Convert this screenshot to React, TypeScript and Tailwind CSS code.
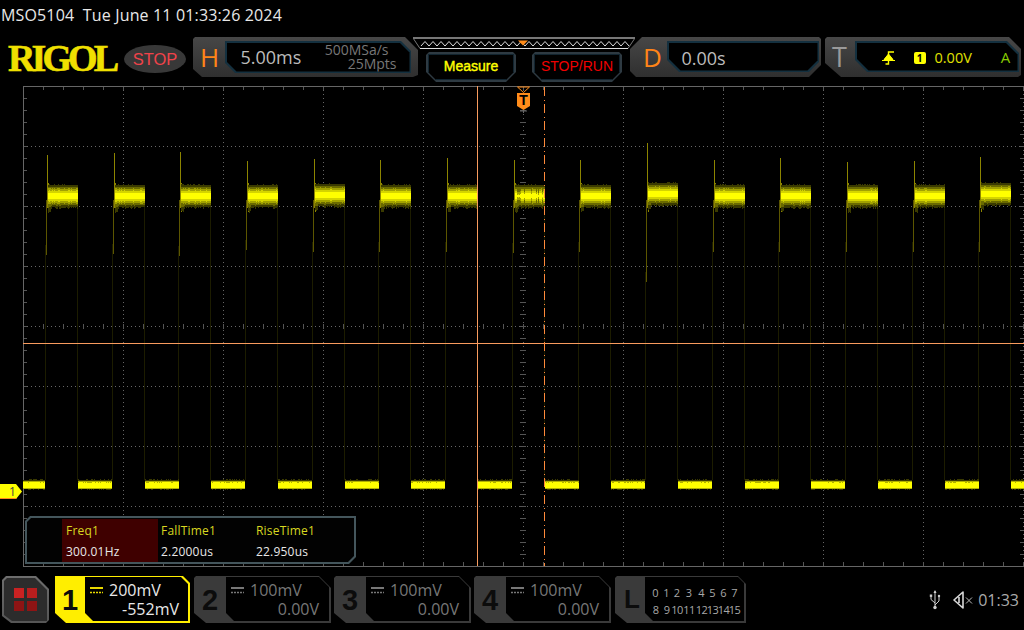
import React, { useMemo } from "react";

const F = { fontFamily: '"Open Sans", "Noto Sans", sans-serif' };

function rng(seed: number) {
  let s = seed;
  return () => {
    s = (s * 16807) % 2147483647;
    return (s - 1) / 2147483646;
  };
}

const STARTS = [47, 113.5, 180, 247, 313.5, 380, 447, 514, 580, 647, 714, 780, 847, 914, 980];
const TOPS = [155, 153, 152, 161, 159, 160, 158, 160, 160, 143, 160, 158, 162, 161, 157];
const BOTS = [255, 254, 256, 250, 252, 252, 252, 253, 252, 282, 252, 252, 252, 252, 252];
const SHIFT = [0, 0, 0, 0, -1, 0, 0, 0, 0, -2, 0, 0, 0, 0, -2];

function Wave() {
  const d = useMemo(() => {
    const r = rng(91);
    const X0 = 23;
    const Y0 = 86;
    const bands = ["", "", "", "", ""];
    const low = ["", "", ""];
    const dim: string[] = [];
    const spikesHi: string[] = [];
    const spikesLo: string[] = [];
    STARTS.forEach((s, i) => {
      const a = Math.round(s) - X0;
      const off = SHIFT[i];
      const stripes = i === 7;
      spikesHi.push(`M${a + 0.5} ${TOPS[i] - Y0}V${208 - Y0}`);
      spikesHi.push(`M${a + 1.5} ${183 - Y0}V${212 - Y0}`);
      spikesLo.push(`M${a - 0.5} ${200 - Y0}V${BOTS[i] - Y0}`);
      dim.push(`M${a - 1.5} ${BOTS[i] - 10 - Y0}V${480 - Y0}`);
      dim.push(`M${a + 30.5} ${207 - Y0}V${480 - Y0}`);
      for (let k = 1; k < 31; k++) {
        if (a + k + X0 > 1024) break;
        const x = a + k + 0.5;
        const n1 = r() * 1.4;
        const n2 = r() * 2.4;
        const v = r() * 2;
        const st = stripes && r() < 0.35 ? 3 + Math.round(r() * 2) : 0;
        const over = k < 4 ? 4 : 0;
        const c = 196 + off;
        const spans = [
          [c - 10.5 - n1, c + 10.5 + n2 + over],
          [c - 8.5 - n1 * 0.6, c + 8.5 + n2 * 0.5 + over * 0.5],
          [c - 6.5 - v * 0.7 + st, c + 6.5 + v * 0.7 - st],
          [c - 4.5 - v * 0.6 + st, c + 4.5 + v * 0.6 - st],
          [c - 2.5 - v * 0.5 + st * 0.5, c + 2.5 + v * 0.5 - st * 0.5],
        ];
        spans.forEach((sp, b) => {
          bands[b] += `M${x} ${Math.round(sp[0]) - Y0}V${Math.round(sp[1]) - Y0}`;
        });
      }
    });
    const lows: [number, number][] = [[23, 45]];
    STARTS.forEach((s) => lows.push([Math.round(s) + 31, Math.round(s) + 65]));
    lows.forEach(([p, q]) => {
      for (let x = p; x < Math.min(q, 1024); x++) {
        const xx = x - X0 + 0.5;
        low[0] += `M${xx} ${479 + Math.round(r() * 1.4) - Y0}V${490 - Math.round(r() * 1.4) - Y0}`;
        low[1] += `M${xx} ${481 - Y0}V${489 - Y0}`;
        low[2] += `M${xx} ${482 + Math.round(r() * 0.7) - Y0}V${488 - Y0}`;
      }
    });
    return { bands, low, dim: dim.join(""), hi: spikesHi.join(""), lo: spikesLo.join("") };
  }, []);
  const colors = ["#3a3a00", "#6a6a00", "#a2a200", "#d4d400", "#ffff00"];
  const lowColors = ["#3a3a00", "#b0b000", "#ffff00"];
  return (
    <g shapeRendering="crispEdges" fill="none" strokeWidth="1">
      <path d={d.dim} stroke="#1c1c00" />
      <path d={d.lo} stroke="#5c5600" />
      <path d={d.hi} stroke="#8c8400" />
      {d.bands.map((b, i) => (
        <path key={i} d={b} stroke={colors[i]} />
      ))}
      {d.low.map((b, i) => (
        <path key={i} d={b} stroke={lowColors[i]} />
      ))}
    </g>
  );
}

function Grid() {
  const p: string[] = [];
  for (let x = 0; x <= 1001; x += 20) {
    p.push(`M${x + 0.5} 0V4`);
    p.push(`M${x + 0.5} 480V476`);
    p.push(`M${x + 0.5} 238V243`);
  }
  for (let y = 0; y <= 480; y += 12) {
    p.push(`M0 ${y + 0.5}H4`);
    p.push(`M1001 ${y + 0.5}H997`);
    p.push(`M497 ${y + 0.5}H503`);
  }
  const dots: string[] = [];
  for (let x = 100; x < 1001; x += 100) dots.push(`M${x + 0.5} 0V480`);
  for (let y = 60; y < 480; y += 60) dots.push(`M0 ${y + 0.5}H1001`);
  return (
    <g shapeRendering="crispEdges" fill="none">
      <path d={dots.join("")} stroke="#666" strokeDasharray="1 3" />
      <path d={p.join("")} stroke="#555" />
      <path d="M0.5 0V480M0 0.5H1001M0 480.5H1001" stroke="#666" />
    </g>
  );
}

function TopBar() {
  let z = "M8 9";
  for (let x = 8, i = 0; x < 216; x += 4, i++) z += `L${x + 4} ${i % 2 ? 9 : 4.5}`;
  return (
    <svg width="222" height="13" viewBox="0 0 222 13" className="block">
      <path d="M0 1H222L215 11.5H7Z" fill="none" stroke="#777" strokeWidth="1" />
      <path d="M0 1H222" stroke="#777" strokeWidth="2" />
      <path d="M7 11.5H215" stroke="#ddd" strokeWidth="1" />
      <path d={z} fill="none" stroke="#ddd" strokeWidth="1" />
      <path d="M105 3.5H115L110 8.5Z" fill="#ff8c1a" />
    </svg>
  );
}

function DcIcon({ c }: { c: string }) {
  return (
    <svg width="13" height="7" viewBox="0 0 13 7" className="block">
      <path d="M0 1H13" stroke={c} strokeWidth="2" />
      <path d="M0 5.5H13" stroke={c} strokeWidth="1.5" strokeDasharray="2 1" />
    </svg>
  );
}

function Channel({ n, ml }: { n: string; ml: string }) {
  return (
    <div className={`${ml} w-[137px] h-[47px] bg-[#3a3a3a] flex [clip-path:polygon(2px_0,calc(100%-12px)_0,100%_12px,100%_100%,12px_100%,0_calc(100%-10px),0_2px)]`}>
      <div className="w-[32px] flex items-center justify-center text-[#0c0c0c] text-[29px] font-bold pt-[3px] [font-family:Liberation_Sans,sans-serif]">{n}</div>
      <div className="flex-1 h-[44px] mt-[1px] mr-[2px] bg-black pl-[5px] text-[#777] text-[16px] leading-[19px] [clip-path:polygon(0_0,calc(100%-10px)_0,100%_10px,100%_100%,8px_100%,0_calc(100%-8px))] relative" style={F}>
        <div className="flex items-center gap-[6px] pt-[4px] whitespace-pre">
          <DcIcon c="#777" />
          <span>100mV</span>
        </div>
        <div className="text-right pr-[10px]">0.00V</div>
      </div>
    </div>
  );
}

export default function App() {
  return (
    <div className="w-[1024px] h-[630px] bg-black relative overflow-hidden flex flex-col" style={F}>
      <div className="h-[32px] pl-[1px] pt-[5px] text-[16px] tracking-[0.15px] leading-[20px] text-[#e8e8e8] whitespace-pre">MSO5104  Tue June 11 01:33:26 2024</div>

      <div className="h-[54px] flex items-start pt-[5px]">
        <div className="ml-[8px] w-[116px] mt-[5px] h-[30px] [font-family:Liberation_Serif,serif] font-bold text-[38px] leading-[32px] tracking-[-3.9px] text-[#f0e000] [-webkit-text-stroke:0.6px_#f0e000]">RIGOL</div>
        <div className="w-[62px] h-[28px] mt-[8px] rounded-[50%] bg-[#383838] text-[#f0434a] text-[16.5px] leading-[28px] text-center [font-family:Liberation_Sans,sans-serif]">STOP</div>

        <div className="ml-[7px] w-[225px] h-[40px] bg-linear-to-b from-[#474747] to-[#2f2f2f] flex [clip-path:polygon(2px_0,calc(100%-13px)_0,100%_13px,100%_calc(100%-2px),calc(100%-5px)_100%,9px_100%,0_calc(100%-8px),0_2px)]">
          <div className="w-[32px] pl-[7px] text-[#ff8418] text-[26px] font-medium leading-[40px]">H</div>
          <div className="w-[186px] h-[32px] mt-[4px] bg-[#14303f] p-[1.5px] [clip-path:polygon(0_0,calc(100%-10px)_0,100%_10px,100%_100%,10px_100%,0_calc(100%-10px))]">
            <div className="w-full h-full bg-black flex items-center justify-between pl-[14px] pr-[13px] [clip-path:polygon(0_0,calc(100%-10px)_0,100%_10px,100%_100%,10px_100%,0_calc(100%-10px))]">
              <span className="text-[#bcbcbc] text-[18px]">5.00ms</span>
              <div className="text-[#777] text-[14px] leading-[14px] text-right">
                <div className="pr-[8px]">500MSa/s</div>
                <div>25Mpts</div>
              </div>
            </div>
          </div>
        </div>

        <div className="-ml-[5px] w-[222px]">
          <TopBar />
          <div className="flex pl-[13px] gap-[16px] mt-[2px]">
            <div className="w-[90px] h-[30px] bg-[#2e3a42] p-[2px] [clip-path:polygon(3px_0,calc(100%-3px)_0,100%_3px,100%_calc(100%-10px),calc(100%-10px)_100%,10px_100%,0_calc(100%-10px),0_3px)]">
              <div className="w-full h-full bg-black border border-[#11242f] pb-[2px] text-[#ffff00] text-[14px] [font-family:Liberation_Sans,sans-serif] [-webkit-text-stroke:0.4px_#ffff00] flex items-center justify-center [clip-path:polygon(0_0,100%_0,100%_calc(100%-8px),calc(100%-8px)_100%,8px_100%,0_calc(100%-8px))]">Measure</div>
            </div>
            <div className="w-[90px] h-[30px] bg-[#2e3a42] p-[2px] [clip-path:polygon(3px_0,calc(100%-3px)_0,100%_3px,100%_calc(100%-10px),calc(100%-10px)_100%,10px_100%,0_calc(100%-10px),0_3px)]">
              <div className="w-full h-full bg-black border border-[#11242f] pb-[2px] text-[#f00000] text-[14px] [font-family:Liberation_Sans,sans-serif] flex items-center justify-center [clip-path:polygon(0_0,100%_0,100%_calc(100%-8px),calc(100%-8px)_100%,8px_100%,0_calc(100%-8px))]">STOP/RUN</div>
            </div>
          </div>
        </div>

        <div className="-ml-[5px] w-[191px] h-[40px] bg-linear-to-b from-[#474747] to-[#2f2f2f] flex [clip-path:polygon(12px_0,calc(100%-2px)_0,100%_2px,100%_calc(100%-12px),calc(100%-12px)_100%,6px_100%,0_calc(100%-6px),0_12px)]">
          <div className="w-[37px] pl-[13px] text-[#ff8418] text-[26px] font-medium leading-[40px] shrink-0">D</div>
          <div className="w-[152px] h-[31px] mt-[4px] bg-[#14303f] p-[1.5px] [clip-path:polygon(0_0,100%_0,100%_calc(100%-10px),calc(100%-10px)_100%,12px_100%,0_calc(100%-12px))]">
            <div className="w-full h-full bg-black flex items-center pl-[13px] pt-[3px] text-[#bcbcbc] text-[18px] [clip-path:polygon(0_0,100%_0,100%_calc(100%-10px),calc(100%-10px)_100%,12px_100%,0_calc(100%-12px))]">0.00s</div>
          </div>
        </div>

        <div className="ml-[4px] w-[196px] h-[40px] bg-linear-to-b from-[#474747] to-[#2f2f2f] flex [clip-path:polygon(2px_0,calc(100%-12px)_0,100%_12px,100%_calc(100%-2px),calc(100%-3px)_100%,16px_100%,0_calc(100%-14px),0_2px)]">
          <div className="w-[30px] pl-[7px] text-[#9a9a9a] text-[27px] font-medium leading-[40px] shrink-0">T</div>
          <div className="w-[164px] h-[31px] mt-[4px] bg-[#14303f] p-[1.5px] [clip-path:polygon(0_0,calc(100%-12px)_0,100%_12px,100%_100%,12px_100%,0_calc(100%-12px))]">
            <div className="w-full h-full bg-black flex items-center pl-[25px] pt-[2px] [clip-path:polygon(0_0,calc(100%-12px)_0,100%_12px,100%_100%,12px_100%,0_calc(100%-12px))]">
              <svg width="13" height="14" viewBox="0 0 13 14" className="block">
                <path d="M3.5 13H6.5V1H12" fill="none" stroke="#ffff00" strokeWidth="1.4" />
                <path d="M0 9.5H13M6.5 3L2 8.5H11Z" fill="#ffff00" stroke="#ffff00" strokeWidth="1" />
              </svg>
              <div className="ml-[19px] w-[12px] h-[12px] rounded-[2px] bg-[#ffff00] text-black text-[10px] leading-[12px] font-bold text-center">1</div>
              <span className="ml-[9px] text-[#e0e000] text-[14.5px]">0.00V</span>
              <span className="ml-[29px] text-[#88cc00] text-[15px]">A</span>
            </div>
          </div>
        </div>
      </div>

      <div className="ml-[23px] h-[481px] w-[1001px] relative shrink-0">
        <svg width="1001" height="481" viewBox="0 0 1001 481" className="absolute inset-0 block">
          <Grid />
          <Wave />
          <path d="M454.5 0V480M0 257.5H1001" stroke="#f99b5e" strokeWidth="1" shapeRendering="crispEdges" />
          <path d="M521.5 1V480" stroke="#ff8a3a" strokeWidth="1" strokeDasharray="9 3.5 1 3.5" shapeRendering="crispEdges" />
          <path d="M494.5 1H506.5L500.5 6.5Z" fill="none" stroke="#ff8c1a" strokeWidth="1" />
          <path d="M494 7H507V20L500.5 24L494 20Z" fill="#ff8c1a" />
          <path d="M500.5 24V27M497 25H504" stroke="#666" strokeWidth="1" />
        </svg>
        <div className="absolute left-[494px] top-[7px] w-[13px] text-center text-black font-bold text-[14px] leading-[15px] [font-family:Liberation_Sans,sans-serif]">T</div>

        <div className="absolute left-[2px] top-[430px] w-[331px] h-[48px] bg-[#44565c] p-[2px] [clip-path:polygon(5px_0,100%_0,100%_calc(100%-7px),calc(100%-7px)_100%,0_100%,0_5px)]">
          <div className="w-full h-full bg-[#020202] flex pl-[35px] pt-[2px] text-[12px] tracking-[0.2px] leading-[21px] [clip-path:polygon(4px_0,100%_0,100%_calc(100%-6px),calc(100%-6px)_100%,0_100%,0_4px)]">
            <div className="w-[96px] h-[43px] -mt-[1px] bg-[#3f0000] pl-[4px] pt-[1px]">
              <div className="text-[#d8d820]">Freq1</div>
              <div className="text-[#e8e8e8]">300.01Hz</div>
            </div>
            <div className="w-[95px] pl-[3px]">
              <div className="text-[#d8d820]">FallTime1</div>
              <div className="text-[#e8e8e8]">2.2000us</div>
            </div>
            <div className="pl-[3px]">
              <div className="text-[#d8d820]">RiseTime1</div>
              <div className="text-[#e8e8e8]">22.950us</div>
            </div>
          </div>
        </div>
      </div>

      <div className="absolute left-0 top-[484px] w-[22px] h-[15px] bg-[#ffff00] border-b border-[#ff8a1a] text-[#444] text-[12px] leading-[15px] pl-[9px] [clip-path:polygon(0_0,calc(100%-6px)_0,100%_50%,calc(100%-6px)_100%,0_100%)]">1</div>

      <div className="flex items-start mt-[9px]">
        <div className="ml-[2px] w-[47px] h-[47px] bg-linear-to-b from-[#6e6e6e] to-[#555] p-[2px] [clip-path:polygon(4px_0,calc(100%-13px)_0,100%_13px,100%_calc(100%-3px),calc(100%-3px)_100%,9px_100%,0_calc(100%-7px),0_4px)]">
          <div className="w-full h-full bg-[#2c2c2c] grid grid-cols-[10px_10px] grid-rows-[10px_10px] gap-[3px] content-center justify-center [clip-path:polygon(3px_0,calc(100%-12px)_0,100%_12px,100%_100%,8px_100%,0_calc(100%-6px),0_3px)]">
            <div className="bg-[#c92222]" />
            <div className="bg-[#b81e1e]" />
            <div className="bg-[#8e1414]" />
            <div className="bg-[#8e1414]" />
          </div>
        </div>

        <div className="ml-[6px] w-[135px] h-[47px] bg-[#ffee00] flex [clip-path:polygon(0_0,calc(100%-7px)_0,100%_7px,100%_100%,11px_100%,0_calc(100%-10px))]">
          <div className="w-[30px] flex items-center justify-center text-[#0c0c0c] text-[29px] font-bold pt-[2px] [font-family:Liberation_Sans,sans-serif]">1</div>
          <div className="flex-1 h-[44px] mt-[1px] mr-[2px] bg-black pl-[5px] text-[#e8e8e8] text-[16px] leading-[19px] [clip-path:polygon(0_0,calc(100%-7px)_0,100%_7px,100%_100%,8px_100%,0_calc(100%-8px))]">
            <div className="flex items-center gap-[6px] pt-[4px]">
              <DcIcon c="#e8d800" />
              <span>200mV</span>
            </div>
            <div className="text-right pr-[9px]">-552mV</div>
          </div>
        </div>

        <Channel n="2" ml="ml-[4px]" />
        <Channel n="3" ml="ml-[3px]" />
        <Channel n="4" ml="ml-[3px]" />

        <div className="ml-[4px] w-[131px] h-[47px] bg-[#3a3a3a] flex [clip-path:polygon(2px_0,calc(100%-8px)_0,100%_8px,100%_100%,12px_100%,0_calc(100%-10px),0_2px)]">
          <div className="w-[30px] pl-[9px] text-[#0c0c0c] text-[26px] font-bold leading-[47px] [font-family:Liberation_Sans,sans-serif]">L</div>
          <div className="flex-1 h-[44px] mt-[1px] mr-[2px] bg-black pl-[5px] pt-[7px] text-[#a8a8a8] text-[11px] leading-[17px] [clip-path:polygon(0_0,calc(100%-6px)_0,100%_6px,100%_100%,8px_100%,0_calc(100%-8px))]">
            <div className="grid grid-cols-[11px_11px_10px_14px_11px_11px_11px_11px] justify-items-center">
              {["0", "1", "2", "3", "4", "5", "6", "7"].map((t) => (
                <span key={t}>{t}</span>
              ))}
            </div>
            <div className="grid grid-cols-[11px_11px_10px_14px_11px_11px_11px_11px] justify-items-center tracking-[-0.6px]">
              {["8", "9", "10", "11", "12", "13", "14", "15"].map((t) => (
                <span key={t}>{t}</span>
              ))}
            </div>
          </div>
        </div>

        <div className="ml-auto mr-[5px] mt-[11px] flex items-center h-[26px]">
          <svg width="12" height="20" viewBox="0 0 12 20" className="block">
            <path d="M6 1V17M6 13L2 9.5V6M6 15L10 11V7" fill="none" stroke="#cfcfcf" strokeWidth="1" />
            <path d="M6 0L4.5 3H7.5Z" fill="#cfcfcf" />
            <circle cx="6" cy="17.5" r="1.7" fill="#cfcfcf" />
            <rect x="0.8" y="4.5" width="2.4" height="2.4" fill="#cfcfcf" />
            <circle cx="10" cy="6" r="1.2" fill="#cfcfcf" />
          </svg>
          <svg width="20" height="18" viewBox="0 0 20 18" className="block ml-[12px]">
            <path d="M1 9L10 1V17ZM6 6V12" fill="none" stroke="#d8d8d8" strokeWidth="1.6" strokeLinejoin="round" />
            <path d="M13 6.5L19 12.5M19 6.5L13 12.5" stroke="#bdbdbd" strokeWidth="1" />
          </svg>
          <span className="ml-[5px] text-[#aaa] text-[16px]">01:33</span>
        </div>
      </div>
    </div>
  );
}
